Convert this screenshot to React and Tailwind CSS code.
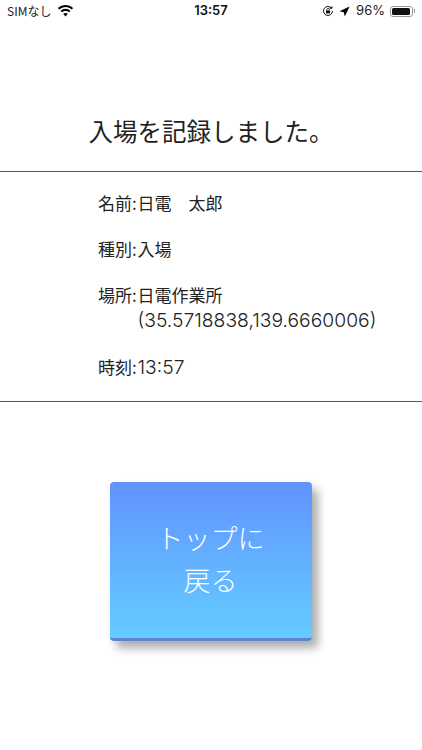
const JP = "font-['Noto_Sans_CJK_JP','Inter','Liberation_Sans',sans-serif]";

function Wifi() {
  return (
    <svg width="17" height="12" viewBox="0 0 16 12" fill="#000">
      <path d="M8 2.1c2.4 0 4.6.9 6.2 2.5l1.5-1.6A11 11 0 0 0 8 0 11 11 0 0 0 .3 3L1.8 4.6A8.9 8.9 0 0 1 8 2.1z" />
      <path d="M8 5.9c1.3 0 2.5.5 3.5 1.4l1.5-1.6a7.3 7.3 0 0 0-5-2 7.3 7.3 0 0 0-5 2l1.5 1.6c1-.9 2.2-1.4 3.5-1.4z" />
      <path d="M8 7.9c-.9 0-1.7.3-2.3.9L8 11.4l2.3-2.6c-.6-.6-1.4-.9-2.3-.9z" />
    </svg>
  );
}

function Row({ label, children }) {
  return (
    <div className="flex text-[17px] leading-[23px] text-[#222]">
      <span className="w-[39.5px] shrink-0">{label}</span>
      <span>{children}</span>
    </div>
  );
}

export default function App() {
  return (
    <div className={`w-[422px] h-[750px] bg-white overflow-hidden flex flex-col ${JP}`}>
      <div className="h-[22px] flex items-center justify-between pl-[7px] pr-[7px] text-[12px] text-[#222] relative">
        <div className="flex items-center gap-[6px]">
          <span>SIMなし</span>
          <Wifi />
        </div>
        <div className="absolute left-0 right-0 text-center font-['Inter'] font-semibold text-[13px] text-[#111]">13:57</div>
        <div className="flex items-center gap-[5px]">
          <svg width="12" height="12" viewBox="0 0 12 12" fill="none" stroke="#111">
            <path d="M10.5 6A4.5 4.5 0 1 1 9 2.6" strokeWidth="1" />
            <path d="M10.6 1.6 9.6 4 7.4 3z" fill="#111" strokeWidth=".4" />
            <rect x="4" y="5.4" width="4" height="3" fill="#111" stroke="none" />
            <path d="M4.8 5.4V4.6a1.2 1.2 0 0 1 2.4 0v.8" strokeWidth=".8" />
          </svg>
          <svg width="11" height="11" viewBox="0 0 11 11" fill="#000"><path d="M10.6.4 5.8 10.6 4.8 6.2.4 5.2z" /></svg>
          <span className="text-[13px] font-['Inter'] ml-[1px]">96%</span>
          <div className="flex items-center">
            <div className="w-[23px] h-[11px] rounded-[3px] border border-[#999] p-[1px]">
              <div className="w-[94%] h-full rounded-[1.5px] bg-[#111]" />
            </div>
            <div className="w-[1px] h-[4px] bg-[#999] ml-[1px]" />
          </div>
        </div>
      </div>

      <div className="mt-[91px] h-[36px] text-center text-[24.5px] leading-[36px] text-[#222]">入場を記録しました。</div>

      <div className="mt-[22px] h-[1px] bg-[#3f5590]" />

      <div className="pl-[98px] pt-[19px] flex flex-col gap-[23px] h-[229px]">
        <Row label="名前:">日電　太郎</Row>
        <Row label="種別:">入場</Row>
        <Row label="場所:">
          日電作業所
          <div className="font-['Inter'] font-light text-[19.3px] leading-[23px] mt-[3px]">(35.5718838,139.6660006)</div>
        </Row>
        <Row label="時刻:"><span className="font-['Inter'] font-light text-[19.3px] leading-[23px]">13:57</span></Row>
      </div>

      <div className="h-[1px] bg-[#3f5590]" />

      <div className="mt-[80px] ml-[110px] w-[202px] h-[159px] rounded-[4px] border-b-[3px] border-[#5f83d0] bg-gradient-to-b from-[#6193ff] to-[#64ccff] shadow-[6px_7px_10px_rgba(0,0,0,0.33)] flex flex-col items-center justify-center text-white text-[27px] leading-[42.5px] font-light pb-[2px] pr-[1px]">
        <div>トップに</div>
        <div>戻る</div>
      </div>
    </div>
  );
}
